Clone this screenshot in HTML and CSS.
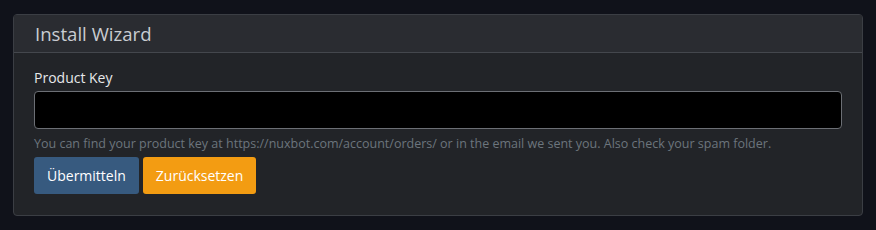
FILE: index.html
```html
<!DOCTYPE html>
<html lang="de">
<head>
    <meta charset="UTF-8">
    <title>Install Wizard</title>
    <link rel="stylesheet" href="styles.css">
</head>
<body>

<div class="card">
    <div class="card-header">Install Wizard</div>
    <div class="card-body">
        <label class="form-label" for="productKey">Product Key</label>
        <input type="text" id="productKey" class="form-control">
        <small class="form-text">You can find your product key at https://nuxbot.com/account/orders/ or in the email we sent you. Also check your spam folder.</small>
        <div class="actions">
            <button class="btn btn-primary">Übermitteln</button>
            <button class="btn btn-warning">Zurücksetzen</button>
        </div>
    </div>
</div>

</body>
</html>
```

FILE: styles.css
```css
body {
    margin: 0;
    padding: 14px 13px;
    background-color: #10121a;
    font-family: 'Open Sans', sans-serif;
    color: #dee2e6;
}
.card {
    background: #222428;
    border: 1px solid #3b3e44;
    border-radius: 4px;
}
.card-header {
    background: #2a2c31;
    border-bottom: 1px solid #44474d;
    height: 37px;
    padding: 0 21px;
    font-size: 18.6px;
    line-height: 37px;
    color: #c9cdd2;
}
.card-body {
    padding: 15px 20px 21px;
}
.form-label {
    display: block;
    font-size: 14px;
    line-height: 20px;
    margin-bottom: 3px;
    color: #e6e8ea;
}
.form-control {
    display: block;
    box-sizing: border-box;
    width: 100%;
    height: 38px;
    margin: 0;
    background: #000;
    border: 1px solid #6c6f75;
    border-radius: 4px;
    color: #fff;
    font-size: 14px;
    padding: 6px 12px;
}
.form-text {
    display: block;
    margin-top: 6px;
    font-size: 12.5px;
    line-height: 18px;
    color: #6c757d;
}
.actions {
    display: flex;
    gap: 4px;
    margin-top: 4px;
}
.btn {
    height: 37px;
    padding: 0 13px;
    border: none;
    border-radius: 3px;
    font-family: inherit;
    font-size: 14px;
    color: #fff;
    cursor: pointer;
}
.btn-primary {
    background: #375a7f;
}
.btn-warning {
    background: #f39c12;
}
```
